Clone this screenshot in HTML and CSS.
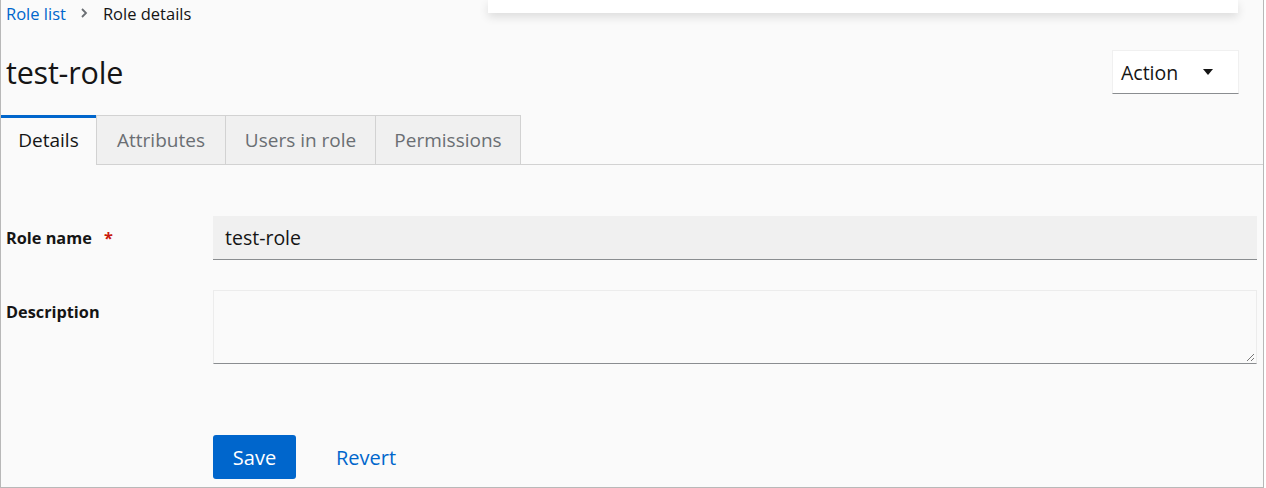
FILE: index.html
```html
<!DOCTYPE html>
<html lang="en">
<head>
<meta charset="utf-8">
<title>Role details</title>
<link rel="stylesheet" href="styles.css">
</head>
<body>
<div class="frame">
  <div class="popover"></div>
  <nav class="breadcrumb">
    <a class="crumb-link" href="#">Role list</a>
    <svg class="crumb-sep" width="8" height="10" viewBox="0 0 8 10"><path d="M2 1l4 4-4 4" fill="none" stroke="#6a6e73" stroke-width="1.8"/></svg>
    <span class="crumb-current">Role details</span>
  </nav>
  <header class="page-header">
    <h1 class="title">test-role</h1>
    <button class="action-btn">Action <svg class="caret" width="12" height="8" viewBox="0 0 12 8"><path d="M1 1h10L6 7z" fill="#151515"/></svg></button>
  </header>
  <div class="tabs">
    <div class="tab active">Details</div>
    <div class="tab">Attributes</div>
    <div class="tab">Users in role</div>
    <div class="tab">Permissions</div>
    <div class="tab-fill"></div>
  </div>
  <form class="form">
    <div class="row">
      <label class="label">Role name <span class="req">*</span></label>
      <div class="input">test-role</div>
    </div>
    <div class="row row-desc">
      <label class="label">Description</label>
      <div class="textarea">
        <svg class="grip" width="10" height="10" viewBox="0 0 10 10"><path d="M9 2L2 9M9 6L6 9" stroke="#777" stroke-width="1"/></svg>
      </div>
    </div>
    <div class="actions">
      <button type="button" class="btn-primary">Save</button>
      <button type="button" class="btn-link">Revert</button>
    </div>
  </form>
</div>
</body>
</html>
```
FILE: styles.css
```css
html, body { margin: 0; padding: 0; background: #fff; }
body { font-family: "Open Sans", "Liberation Sans", sans-serif; color: #151515; }
.frame {
  position: relative;
  width: 1262px;
  height: 487px;
  border-left: 1px solid #b8b8b8;
  border-right: 1px solid #b8b8b8;
  border-bottom: 1px solid #b8b8b8;
  background: #fafafa;
  overflow: hidden;
}
.popover {
  position: absolute;
  left: 487px;
  top: 0;
  width: 750px;
  height: 13px;
  background: #fff;
  box-shadow: 0 4px 10px rgba(0,0,0,0.12);
}
.breadcrumb {
  display: flex;
  align-items: center;
  height: 24px;
  padding: 1px 0 0 5px;
  font-size: 16.5px;
}
.crumb-link { color: #0066cc; text-decoration: none; }
.crumb-sep { margin: 0 15px 0 14px; }
.crumb-current { color: #151515; }
.page-header {
  display: flex;
  align-items: center;
  justify-content: space-between;
  margin-top: 25px;
  height: 44px;
  padding: 0 24px 0 5px;
}
.title { margin: 0; font-size: 30.5px; font-weight: 500; letter-spacing: -0.2px; }
.action-btn {
  display: flex;
  align-items: center;
  width: 127px;
  height: 44px;
  padding: 0 0 0 8px;
  background: #fff;
  border: 1px solid #f0f0f0;
  border-bottom: 1px solid #8a8d90;
  font-family: inherit;
  font-size: 19.5px;
  color: #151515;
}
.caret { margin-left: 24px; }
.tabs {
  display: flex;
  margin-top: 21px;
  height: 50px;
}
.tab {
  display: flex;
  align-items: center;
  justify-content: center;
  box-sizing: border-box;
  height: 50px;
  padding: 0 10px 1px;
  font-size: 19px;
  color: #6a6e73;
  background: #f0f0f0;
  border: 1px solid #d2d2d2;
  border-right: none;
}
.tab.active {
  width: 95px;
  background: #fafafa;
  color: #151515;
  border: none;
  border-top: 3px solid #0066cc;
  padding: 0 0 4px;
}
.tab:nth-child(2) { width: 129px; }
.tab:nth-child(3) { width: 150px; }
.tab:nth-child(4) { width: 146px; border-right: 1px solid #d2d2d2; }
.tab-fill { flex: 1; border-bottom: 1px solid #d2d2d2; }
.form { padding: 51px 5px 0 5px; }
.row { display: flex; align-items: center; }
.label { width: 207px; font-size: 16.3px; font-weight: 700; }
.req { color: #c9190b; margin-left: 8px; }
.input {
  box-sizing: border-box;
  width: 1044px;
  height: 44px;
  padding: 0 12px 1px;
  display: flex;
  align-items: center;
  background: #f0f0f0;
  border-bottom: 1px solid #8a8d90;
  font-size: 19.5px;
}
.row-desc { align-items: flex-start; margin-top: 30px; }
.row-desc .label { padding-top: 11px; }
.textarea {
  position: relative;
  box-sizing: border-box;
  width: 1044px;
  height: 74px;
  background: #fafafa;
  border: 1px solid #ececec;
  border-bottom: 1px solid #8a8d90;
}
.grip { position: absolute; right: 1px; bottom: 1px; }
.actions { display: flex; align-items: center; margin: 71px 0 0 207px; }
.btn-primary {
  width: 83px;
  height: 44px;
  padding: 0;
  background: #0066cc;
  color: #fff;
  border: none;
  border-radius: 3px;
  font-family: inherit;
  font-size: 20px;
  font-weight: 500;
}
.btn-link {
  margin-left: 24px;
  padding: 0 16px;
  height: 44px;
  background: none;
  border: none;
  color: #0066cc;
  font-family: inherit;
  font-size: 20px;
  font-weight: 500;
}
```
